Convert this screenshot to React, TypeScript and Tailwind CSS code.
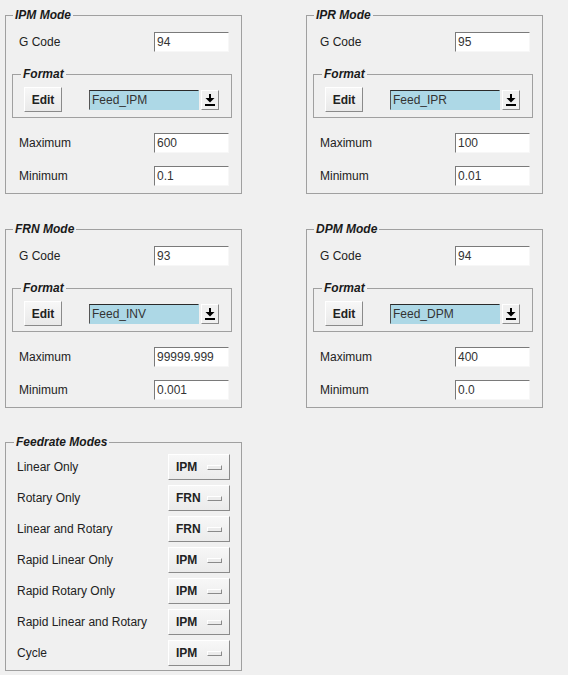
// Feedrate settings dialog - mode panels and feedrate mode selectors

function DownArrow() {
  return (
    <svg width="10" height="12" viewBox="0 0 10 12">
      <rect x="4" y="0" width="2" height="4" fill="#000" />
      <polygon points="0.5,4 9.5,4 5,8.5" fill="#000" />
      <rect x="0" y="10" width="10" height="2" fill="#000" />
    </svg>
  )
}

function Field({ label, value }: { label: string; value: string }) {
  return (
    <div className="flex items-center h-[20px] pl-[13px] pr-[12px]">
      <span className="flex-1 text-[#222]">{label}</span>
      <div className="w-[75px] h-[20px] bg-white border border-t-[#7a7a7a] border-l-[#7a7a7a] border-r-[#f7f7f7] border-b-[#f7f7f7] pl-[2px] leading-[18px] text-[#333]">
        {value}
      </div>
    </div>
  )
}

type Mode = { title: string; gcode: string; format: string; max: string; min: string }

function ModePanel({ mode }: { mode: Mode }) {
  return (
    <fieldset className="w-[237px] border border-[#a0a0a0]">
      <legend className="ml-[7px] px-[2px] leading-[15px] font-bold italic text-[#1a1a1a]">{mode.title}</legend>
      <div className="pt-[9px] pb-[7px]">
        <Field label="G Code" value={mode.gcode} />

        {/* Format group */}
        <fieldset className="mt-[15px] ml-[6px] w-[220px] border border-[#a0a0a0]">
          <legend className="ml-[8px] px-[2px] leading-[15px] font-bold italic text-[#1a1a1a]">Format</legend>
          <div className="flex items-center pt-[5px] pb-[5px]">
            <button className="ml-[11px] w-[38px] h-[25px] flex items-center justify-center font-bold text-[#222] bg-linear-to-b from-[#f7f7f7] to-[#e9e9e9] border border-t-white border-l-white border-r-[#8a8a8a] border-b-[#8a8a8a]">
              Edit
            </button>
            <div className="ml-[27px] w-[110px] h-[20px] bg-[#add8e6] border border-t-[#2a2a2a] border-l-[#555] border-r-[#add8e6] border-b-[#add8e6] pl-[2px] leading-[18px] text-[#333]">
              {mode.format}
            </div>
            <div className="ml-[2px] w-[18px] h-[20px] flex items-center justify-center bg-[#f0f0f0] border border-t-white border-l-white border-r-[#8a8a8a] border-b-[#8a8a8a]">
              <DownArrow />
            </div>
          </div>
        </fieldset>

        <div className="mt-[15px]">
          <Field label="Maximum" value={mode.max} />
        </div>
        <div className="mt-[13px]">
          <Field label="Minimum" value={mode.min} />
        </div>
      </div>
    </fieldset>
  )
}

const modes: Mode[] = [
  { title: 'IPM Mode', gcode: '94', format: 'Feed_IPM', max: '600', min: '0.1' },
  { title: 'IPR Mode', gcode: '95', format: 'Feed_IPR', max: '100', min: '0.01' },
  { title: 'FRN Mode', gcode: '93', format: 'Feed_INV', max: '99999.999', min: '0.001' },
  { title: 'DPM Mode', gcode: '94', format: 'Feed_DPM', max: '400', min: '0.0' },
]

const feedrates = [
  { name: 'Linear Only', value: 'IPM' },
  { name: 'Rotary Only', value: 'FRN' },
  { name: 'Linear and Rotary', value: 'FRN' },
  { name: 'Rapid Linear Only', value: 'IPM' },
  { name: 'Rapid Rotary Only', value: 'IPM' },
  { name: 'Rapid Linear and Rotary', value: 'IPM' },
  { name: 'Cycle', value: 'IPM' },
]

export default function App() {
  return (
    <div className="w-[568px] h-[675px] bg-[#f0f0f0] pl-[5px] pt-[8px] text-[12px] font-['Liberation_Sans',Arial,sans-serif] overflow-hidden">
      <div className="grid grid-cols-[237px_238px] gap-x-[64px] gap-y-[28px]">
        {modes.map((m) => (
          <ModePanel key={m.title} mode={m} />
        ))}
      </div>

      {/* Feedrate Modes */}
      <fieldset className="mt-[27px] w-[237px] border border-[#a0a0a0]">
        <legend className="ml-[8px] px-[2px] leading-[15px] font-bold italic text-[#1a1a1a]">Feedrate Modes</legend>
        <div className="flex flex-col gap-[5px] pt-[4px] pb-[4px]">
          {feedrates.map((f) => (
            <div key={f.name} className="flex items-center h-[26px] pl-[11px] pr-[11px]">
              <span className="flex-1 text-[#222]">{f.name}</span>
              <div className="w-[62px] h-[26px] flex items-center justify-between px-[7px] bg-linear-to-b from-[#f7f7f7] to-[#ebebeb] border border-t-white border-l-white border-r-[#8a8a8a] border-b-[#8a8a8a]">
                <span className="font-bold text-[#222]">{f.value}</span>
                <span className="w-[15px] h-[5px] bg-[#ececec] border border-t-white border-l-white border-r-[#8a8a8a] border-b-[#8a8a8a]" />
              </div>
            </div>
          ))}
        </div>
      </fieldset>
    </div>
  )
}
